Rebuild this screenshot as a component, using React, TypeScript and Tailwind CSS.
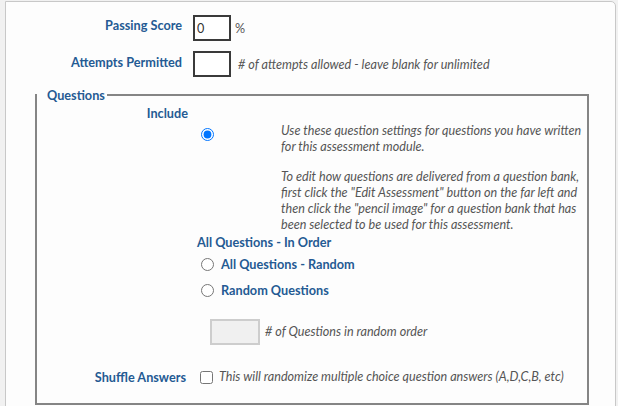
import React from "react";

const label = "font-bold text-[#245a93] text-[12.7px] leading-[18px]";
const note = "italic text-[#555] text-[12.6px]";

export default function App() {
  return (
    <div
      className="w-[618px] h-[406px] overflow-hidden bg-[#f1f1f1]"
      style={{ fontFamily: "Lato, 'Noto Sans', sans-serif" }}
    >
      <div className="ml-[5px] mt-[1px] w-[611px] border border-[#c8c8c8] rounded-tr-[5px] bg-[#fdfdfd] pt-[13px] pb-[30px]">
        {/* Passing Score */}
        <div className="flex items-start">
          <div className={`w-[176px] text-right pt-[1px] ${label}`}>Passing Score</div>
          <input
            type="text"
            defaultValue="0"
            className="ml-[11px] w-[38px] h-[26px] border-2 border-[#3a3a3a] px-[2px] text-[12.6px] text-[#333] bg-white outline-none"
          />
          <span className="ml-[4px] pt-[5px] text-[12.6px] text-[#555]">%</span>
        </div>
        {/* Attempts */}
        <div className="flex items-start mt-[10px]">
          <div className={`w-[176px] text-right pt-[2px] ${label}`}>Attempts Permitted</div>
          <input
            type="text"
            className="ml-[11px] w-[38px] h-[26px] border-2 border-[#3a3a3a] px-[2px] text-[12.6px] bg-white outline-none"
          />
          <span className={`ml-[7px] pt-[5px] ${note}`}># of attempts allowed - leave blank for unlimited</span>
        </div>
        {/* Questions fieldset */}
        <fieldset className="ml-[29px] mt-[9px] w-[554px] border-2 border-[#858585] pb-[16px]">
          <legend className={`pl-[10px] pr-[2px] ${label}`}>Questions</legend>
          <div className={`w-[151px] text-right ${label}`}>Include</div>
          <div className="flex items-start mt-[1px]">
            <input type="radio" name="q" defaultChecked className="ml-[164px] mt-[5px] w-[13px] h-[13px] m-0" />
            <div className={`ml-[67px] w-[302px] leading-[16px] ${note}`}>
              <p>Use these question settings for questions you have written for this assessment module.</p>
              <p className="mt-[14px]">
                To edit how questions are delivered from a question bank, first click the "Edit Assessment" button on the far left and then click the "pencil image" for a question bank that has been selected to be used for this assessment.
              </p>
            </div>
          </div>
          <div className={`ml-[160px] ${label}`}>All Questions - In Order</div>
          <div className="flex items-center mt-[3px] h-[20px]">
            <input type="radio" name="q" className="ml-[164px] w-[13px] h-[13px] m-0" />
            <span className={`ml-[7px] ${label}`}>All Questions - Random</span>
          </div>
          <div className="flex items-center mt-[6px] h-[20px]">
            <input type="radio" name="q" className="ml-[164px] w-[13px] h-[13px] m-0" />
            <span className={`ml-[7px] ${label}`}>Random Questions</span>
          </div>
          <div className="flex items-center mt-[19px]">
            <input
              type="text"
              disabled
              className="ml-[173px] w-[50px] h-[26px] border-2 border-[#cdcdcd] bg-[#f0f0f0]"
            />
            <span className={`ml-[5px] ${note}`}># of Questions in random order</span>
          </div>
          <div className="flex items-center mt-[22px] h-[20px]">
            <div className={`w-[149px] text-right ${label}`}>Shuffle Answers</div>
            <input type="checkbox" className="ml-[14px] w-[13px] h-[13px] m-0" />
            <span className={`ml-[6px] ${note}`}>This will randomize multiple choice question answers (A,D,C,B, etc)</span>
          </div>
        </fieldset>
      </div>
    </div>
  );
}
